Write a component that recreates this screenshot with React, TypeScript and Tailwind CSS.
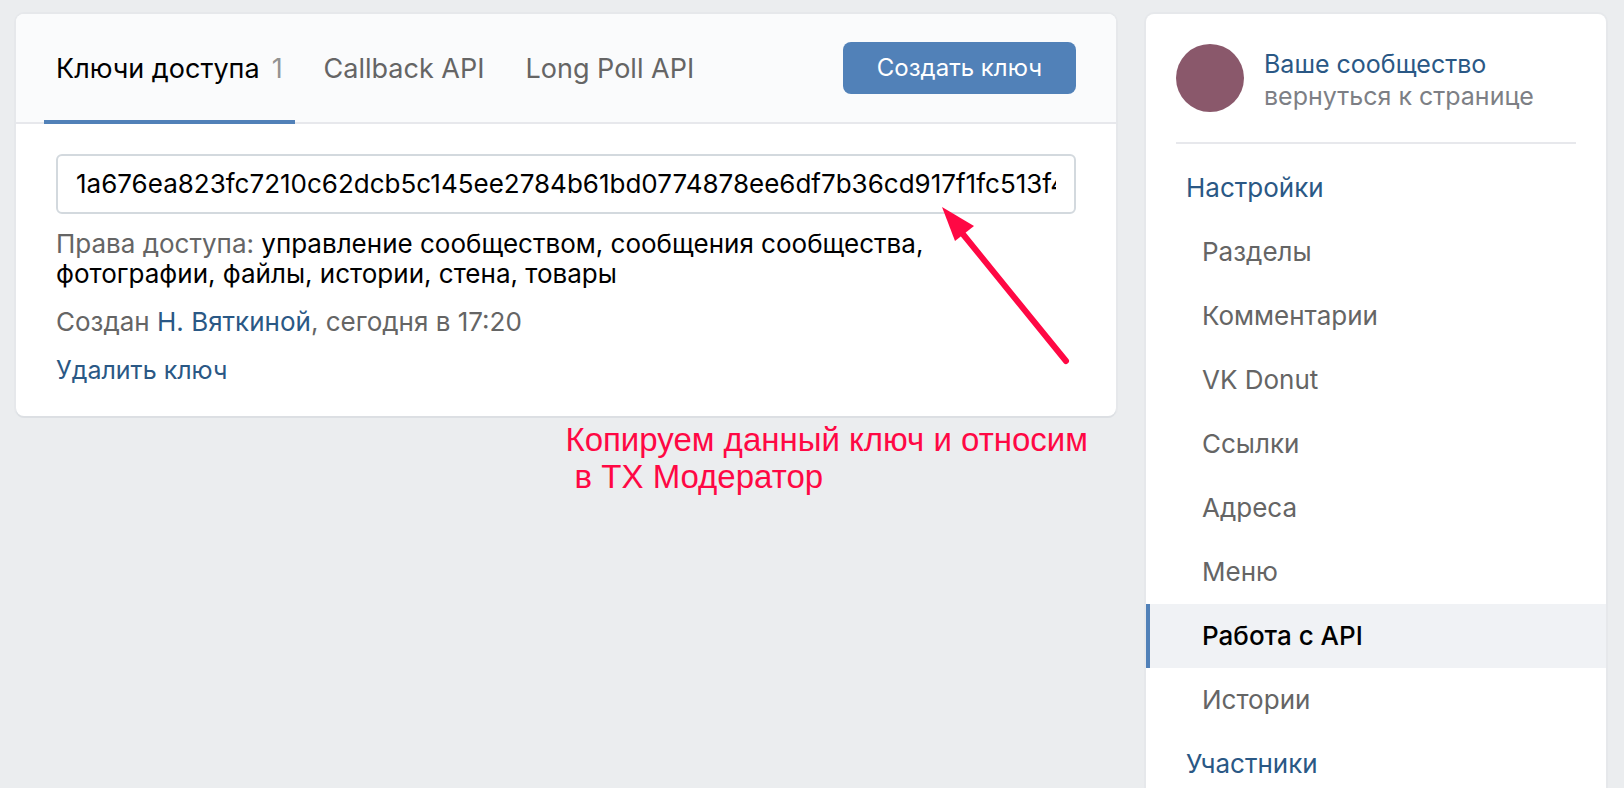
import { useState } from "react";

interface MenuItem {
  title: string;
  top?: boolean;
}

const MENU: MenuItem[] = [
  { title: "Настройки", top: true },
  { title: "Разделы" },
  { title: "Комментарии" },
  { title: "VK Donut" },
  { title: "Ссылки" },
  { title: "Адреса" },
  { title: "Меню" },
  { title: "Работа с API" },
  { title: "Истории" },
  { title: "Участники", top: true },
];

const TABS = [
  { title: "Ключи доступа", count: 1 },
  { title: "Callback API" },
  { title: "Long Poll API" },
];

const KEY = "1a676ea823fc7210c62dcb5c145ee2784b61bd0774878ee6df7b36cd917f1fc513f4";

function Arrow() {
  return (
    <svg className="absolute right-11 top-48 text-[#ff0844]" width="132" height="160" viewBox="0 0 132 160" aria-hidden="true">
      <path d="M22 27 L126 155" stroke="currentColor" strokeWidth="6" strokeLinecap="round" />
      <path d="M2 1 L34 20 L15 35 Z" fill="currentColor" />
    </svg>
  );
}

function Tabs() {
  const [active, setActive] = useState(0);
  return (
    <div className="flex items-stretch">
      {TABS.map(({ title, count }, i) => (
        <button key={title} onClick={() => setActive(i)}
          className={i === active
            ? "-mb-0.5 mr-[17px] cursor-pointer border-b-4 border-[#5181b8] px-3 pt-1 text-black"
            : "-mb-0.5 mr-[17px] cursor-pointer border-b-4 border-transparent px-3 pt-1 text-[#656565]"}>
          {title}
          {count && <span className="ml-3 text-[#939393]">{count}</span>}
        </button>
      ))}
    </div>
  );
}

function KeysCard() {
  return (
    <section className="relative rounded-lg bg-white shadow-[0_2px_0_0_#dcdfe3,0_0_0_2px_#e6e8eb]">
      <header className="flex h-[110px] justify-between rounded-t-lg border-b-2 border-[#e7e8ec] bg-[#fafbfc] pr-10 pl-7 text-[27px]">
        <Tabs />
        <button className="h-13 cursor-pointer self-center rounded-lg bg-[#5181b8] px-[34px] text-2xl text-white">
          Создать ключ
        </button>
      </header>
      <div className="px-10 pt-[30px] pb-[31px] leading-[30px] text-[#656565]">
        <input aria-label="Ключ доступа" readOnly value={KEY}
          className="h-15 w-full rounded-md border-2 border-[#d3d9de] bg-white px-[18px] pb-0.5 text-black outline-none" />
        <p className="mt-[15px] max-w-[880px]">
          Права доступа: <span className="text-black">управление сообществом, сообщения сообщества, фотографии, файлы, истории, стена, товары</span>
        </p>
        <p className="mt-[18px]">
          Создан <a href="#author" className="text-[#2a5885]">Н. Вяткиной</a>, сегодня в 17:20
        </p>
        <p className="mt-[18px]">
          <button className="cursor-pointer text-[25px] text-[#2a5885]">Удалить ключ</button>
        </p>
      </div>
      <Arrow />
    </section>
  );
}

function Sidebar() {
  const [active, setActive] = useState("Работа с API");
  return (
    <aside className="w-[460px] shrink-0 rounded-t-lg bg-white shadow-[0_0_0_2px_#e6e8eb]">
      <a href="#community" className="mx-[30px] flex h-[130px] gap-5 border-b-2 border-[#e7e8ec] pt-[30px] text-[25px]">
        <span className="size-17 rounded-full bg-[#8a586b]" />
        <span className="pt-1 leading-8">
          <span className="block text-[#2a5885]">Ваше сообщество</span>
          <span className="block text-[#7d7f85]">вернуться к странице</span>
        </span>
      </a>
      <nav className="pt-3">
        {MENU.map(({ title, top }) => {
          let style = "border-transparent pl-[52px] text-[#656565]";
          if (top) {
            style = "border-transparent pl-9 text-[#2a5885]";
          }
          if (title === active) {
            style = "border-[#5181b8] bg-[#f0f2f5] pl-[52px] font-medium text-black";
          }
          return (
            <a key={title} href="#menu" onClick={() => setActive(title)}
              className={`block h-16 border-l-4 leading-16 ${style}`}>{title}</a>
          );
        })}
      </nav>
    </aside>
  );
}

export default function App() {
  return (
    <div className="flex h-screen gap-[30px] overflow-hidden bg-[#ebedef] pt-3.5 pr-[18px] pl-4 font-[Inter,'Noto_Sans',sans-serif] text-[26px]">
      <main className="min-w-0 grow">
        <KeysCard />
        <p className="mt-[5px] flex justify-end pr-7 font-['Liberation_Sans',Arial,sans-serif] text-[33px] leading-[37px] whitespace-pre text-[#ff0844]">
          {"Копируем данный ключ и относим\n в ТХ Модератор"}
        </p>
      </main>
      <Sidebar />
    </div>
  );
}
